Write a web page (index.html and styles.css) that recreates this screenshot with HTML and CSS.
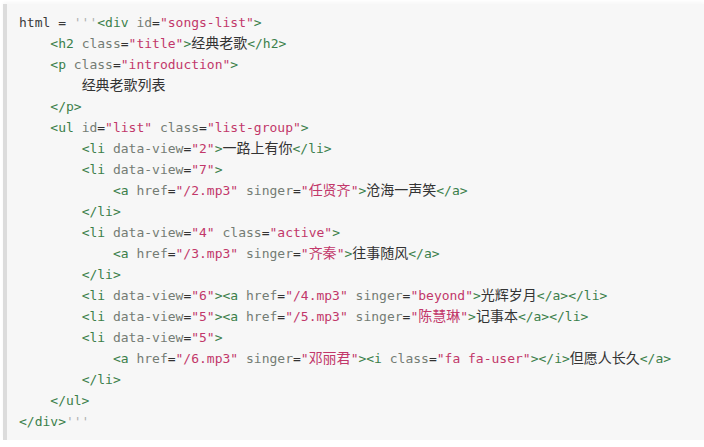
FILE: index.html
```html
<!DOCTYPE html>
<html>
<head>
<meta charset="utf-8">
<link rel="stylesheet" href="styles.css">
</head>
<body>
<pre class="code"><span class="p">html = </span><span class="q">'''</span><span class="t">&lt;div</span> <span class="an">id</span>=<span class="av">"songs-list"</span><span class="t">&gt;</span>
    <span class="t">&lt;h2</span> <span class="an">class</span>=<span class="av">"title"</span><span class="t">&gt;</span><span class="zh">经典老歌</span><span class="t">&lt;/h2&gt;</span>
    <span class="t">&lt;p</span> <span class="an">class</span>=<span class="av">"introduction"</span><span class="t">&gt;</span>
        <span class="zh">经典老歌列表</span>
    <span class="t">&lt;/p&gt;</span>
    <span class="t">&lt;ul</span> <span class="an">id</span>=<span class="av">"list"</span> <span class="an">class</span>=<span class="av">"list-group"</span><span class="t">&gt;</span>
        <span class="t">&lt;li</span> <span class="an">data-view</span>=<span class="av">"2"</span><span class="t">&gt;</span><span class="zh">一路上有你</span><span class="t">&lt;/li&gt;</span>
        <span class="t">&lt;li</span> <span class="an">data-view</span>=<span class="av">"7"</span><span class="t">&gt;</span>
            <span class="t">&lt;a</span> <span class="an">href</span>=<span class="av">"/2.mp3"</span> <span class="an">singer</span>=<span class="av">"<span class="zh">任贤齐</span>"</span><span class="t">&gt;</span><span class="zh">沧海一声笑</span><span class="t">&lt;/a&gt;</span>
        <span class="t">&lt;/li&gt;</span>
        <span class="t">&lt;li</span> <span class="an">data-view</span>=<span class="av">"4"</span> <span class="an">class</span>=<span class="av">"active"</span><span class="t">&gt;</span>
            <span class="t">&lt;a</span> <span class="an">href</span>=<span class="av">"/3.mp3"</span> <span class="an">singer</span>=<span class="av">"<span class="zh">齐秦</span>"</span><span class="t">&gt;</span><span class="zh">往事随风</span><span class="t">&lt;/a&gt;</span>
        <span class="t">&lt;/li&gt;</span>
        <span class="t">&lt;li</span> <span class="an">data-view</span>=<span class="av">"6"</span><span class="t">&gt;&lt;a</span> <span class="an">href</span>=<span class="av">"/4.mp3"</span> <span class="an">singer</span>=<span class="av">"beyond"</span><span class="t">&gt;</span><span class="zh">光辉岁月</span><span class="t">&lt;/a&gt;&lt;/li&gt;</span>
        <span class="t">&lt;li</span> <span class="an">data-view</span>=<span class="av">"5"</span><span class="t">&gt;&lt;a</span> <span class="an">href</span>=<span class="av">"/5.mp3"</span> <span class="an">singer</span>=<span class="av">"<span class="zh">陈慧琳</span>"</span><span class="t">&gt;</span><span class="zh">记事本</span><span class="t">&lt;/a&gt;&lt;/li&gt;</span>
        <span class="t">&lt;li</span> <span class="an">data-view</span>=<span class="av">"5"</span><span class="t">&gt;</span>
            <span class="t">&lt;a</span> <span class="an">href</span>=<span class="av">"/6.mp3"</span> <span class="an">singer</span>=<span class="av">"<span class="zh">邓丽君</span>"</span><span class="t">&gt;&lt;i</span> <span class="an">class</span>=<span class="av">"fa fa-user"</span><span class="t">&gt;&lt;/i&gt;</span><span class="zh">但愿人长久</span><span class="t">&lt;/a&gt;</span>
        <span class="t">&lt;/li&gt;</span>
    <span class="t">&lt;/ul&gt;</span>
<span class="t">&lt;/div&gt;</span><span class="q">'''</span></pre>
</body>
</html>
```

FILE: styles.css
```css
html, body {
  margin: 0;
  padding: 0;
  background: #ffffff;
}

.code {
  margin: 4px 0 0 3px;
  padding: 8px 12px;
  height: 420px;
  border-left: 4px solid #dcdcdc;
  background: #f7f7f7;
  font-family: "DejaVu Sans Mono", "Liberation Mono", "Noto Sans CJK SC", monospace;
  font-size: 13px;
  line-height: 21px;
  color: #333333;
  white-space: pre;
  overflow: hidden;
  box-shadow: 0 -2px 3px rgba(0, 0, 0, 0.03);
}

.p { color: #3a3a3a; }
.q { color: #b0b0b0; }
.t { color: #3b7f4a; }
.an { color: #747c74; }
.av { color: #c2376a; }

.zh {
  font-family: "Noto Sans CJK SC", sans-serif;
  font-size: 14px;
  line-height: 0;
  color: #333333;
}

.av .zh { color: #c2376a; }
```
